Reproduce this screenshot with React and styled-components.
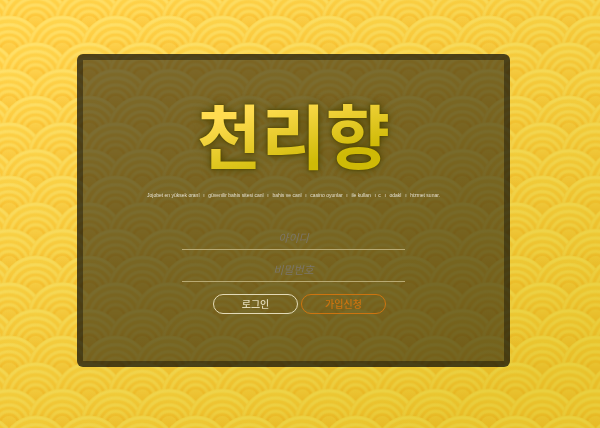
import React from "react";
import styled, { createGlobalStyle } from "styled-components";

const GlobalStyle = createGlobalStyle`
  * {
    box-sizing: border-box;
  }

  body {
    margin: 0;
    background-color: #f6d446;
    font-family: "Liberation Sans", "Noto Sans CJK KR", sans-serif;
  }
`;

const Backdrop = styled.svg`
  position: fixed;
  inset: 0;
  width: 100%;
  height: 100%;
  z-index: -1;
`;

const Page = styled.main`
  min-height: 100vh;
  padding: 54px 90px 54px 77px;
`;

const Panel = styled.section`
  display: flex;
  flex-direction: column;
  align-items: center;
  padding: 32px 16px 47px;
  border: 6px solid rgba(0, 0, 0, 0.38);
  border-radius: 6px;
  background-color: rgba(12, 12, 12, 0.53);
`;

const Logo = styled.h1`
  margin: 0;
  font-family: "Noto Sans CJK KR", sans-serif;
  font-size: 70px;
  font-weight: 700;
  line-height: 84px;
  color: transparent;
  background: linear-gradient(165deg, #ffdc50 25%, #cfba06 75%);
  background-clip: text;
  filter: drop-shadow(0 0 1px #4e4500) drop-shadow(0 0 4px #4e4500);
`;

const Tagline = styled.p`
  margin: 15px 0 0;
  font-size: 5px;
  line-height: 8px;
  color: #e3dfcf;
  white-space: pre;
`;

const WideLetter = styled.span`
  display: inline-block;
  width: 6px;
  text-align: center;
`;

const LoginForm = styled.form`
  display: flex;
  flex-direction: column;
  width: 100%;
  max-width: 223px;
  margin-top: 26px;
`;

const Field = styled.input`
  width: 100%;
  height: 25px;
  margin-bottom: 7px;
  padding: 0 0 1px;
  border: 0;
  border-bottom: 1px solid #b8a972;
  outline: none;
  background: transparent;
  color: #fff;
  font-family: "Noto Sans CJK KR", sans-serif;
  font-size: 11px;
  text-align: center;

  &::placeholder {
    color: #7b7568;
    font-style: italic;
    opacity: 1;
  }
`;

const Actions = styled.div`
  display: flex;
  justify-content: center;
  gap: 3px;
  margin-top: 5px;
  padding-left: 12px;
`;

const PillButton = styled.button`
  width: 85px;
  height: 20px;
  padding: 0;
  border: 1px solid ${({ $color }) => $color};
  border-radius: 10px;
  background: transparent;
  color: ${({ $color }) => $color};
  font-family: "Noto Sans CJK KR", sans-serif;
  font-size: 10px;
  font-weight: 500;
  line-height: 16px;
  cursor: pointer;
`;

const TILE = 53.33;
const HALF = TILE / 2;

// Rows run top to bottom so that each one covers the feet of the row above.
const WAVES = [
  [0, 0],
  [TILE, 0],
  [-HALF, HALF],
  [HALF, HALF],
  [TILE + HALF, HALF],
  [0, TILE],
  [TILE, TILE],
  [-HALF, TILE + HALF],
  [HALF, TILE + HALF],
  [TILE + HALF, TILE + HALF],
];

const RINGS = [33, 26, 19, 12.5];

const WavePattern = () => (
  <Backdrop aria-hidden="true">
    <defs>
      <linearGradient
        id="disc"
        gradientUnits="userSpaceOnUse"
        x1="0"
        y1="-35"
        x2="0"
        y2="4"
      >
        <stop offset="0" stopColor="#ffd750" />
        <stop offset="0.6" stopColor="#ffcd42" />
        <stop offset="1" stopColor="#f9b92b" />
      </linearGradient>
      <linearGradient
        id="shine"
        gradientUnits="userSpaceOnUse"
        x1="0"
        y1="-35"
        x2="0"
        y2="4"
      >
        <stop offset="0" stopColor="#ffe575" />
        <stop offset="0.6" stopColor="#ffdf66" />
        <stop offset="1" stopColor="#ffcf45" />
      </linearGradient>
      <linearGradient id="shade" x1="0" y1="0" x2="0.7" y2="1">
        <stop offset="0.1" stopColor="#ffffff" />
        <stop offset="1" stopColor="#e9ec98" />
      </linearGradient>
      <g id="wave">
        <circle r="35" fill="url(#disc)" />
        <g fill="none" stroke="url(#shine)">
          {RINGS.map((r) => (
            <React.Fragment key={r}>
              <circle r={r} strokeWidth="4" opacity="0.5" />
              <circle r={r} strokeWidth="2" opacity="0.6" />
            </React.Fragment>
          ))}
        </g>
        <circle r="8" fill="url(#shine)" opacity="0.6" />
      </g>
      <pattern
        id="waves"
        x="35.7"
        y="24"
        width={TILE}
        height={TILE}
        patternUnits="userSpaceOnUse"
      >
        {WAVES.map(([x, y]) => (
          <use key={`${x}-${y}`} href="#wave" x={x} y={y} />
        ))}
      </pattern>
    </defs>
    <rect width="100%" height="100%" fill="url(#waves)" />
    <rect
      width="100%"
      height="100%"
      fill="url(#shade)"
      style={{ mixBlendMode: "multiply" }}
    />
  </Backdrop>
);

const I = () => <WideLetter>ı</WideLetter>;

const App = () => (
  <>
    <GlobalStyle />
    <WavePattern />
    <Page>
      <Panel>
        <Logo>천리향</Logo>
        <Tagline>
          Jojobet en yüksek oranl <I /> güvenilir bahis sitesi canl <I /> bahis
          ve canl <I /> casino oyunlar <I /> ile kullan <I />c <I /> odakl{" "}
          <I /> hizmet sunar.
        </Tagline>
        <LoginForm onSubmit={(e) => e.preventDefault()}>
          <Field type="text" placeholder="아이디" aria-label="아이디" />
          <Field type="password" placeholder="비밀번호" aria-label="비밀번호" />
          <Actions>
            <PillButton type="submit" $color="#e2dab8">
              로그인
            </PillButton>
            <PillButton type="button" $color="#cc7410">
              가입신청
            </PillButton>
          </Actions>
        </LoginForm>
      </Panel>
    </Page>
  </>
);

export default App;
